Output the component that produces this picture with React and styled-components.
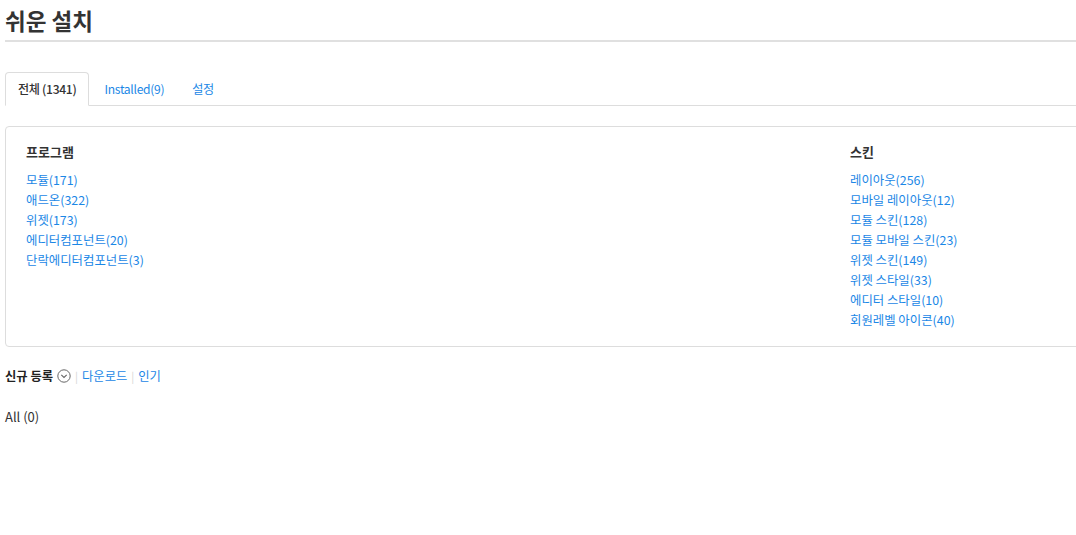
import React from "react";
import styled, { createGlobalStyle } from "styled-components";

const Global = createGlobalStyle`
  html, body { margin: 0; padding: 0; background: #fff; overflow: hidden; }
  body {
    font-family: "Noto Sans CJK KR", "Noto Sans", sans-serif;
    color: #333;
    font-size: 13px;
  }
  a { text-decoration: none; }
`;

const Page = styled.div`
  width: 1110px;
  padding: 0 5px;
`;

const Title = styled.h1`
  margin: 0;
  height: 40px;
  font-size: 22.5px;
  font-weight: 700;
  line-height: 40px;
  color: #333;
  border-bottom: 2px solid #e0e0e0;
`;

const Tabs = styled.ul`
  display: flex;
  list-style: none;
  margin: 30px 0 0;
  padding: 0;
  border-bottom: 1px solid #ddd;
`;

const Tab = styled.li`
  margin-right: 2px;
  margin-bottom: -1px;
  padding: 0 12px;
  height: 32px;
  line-height: 32px;
  font-size: 12.1px;
  letter-spacing: -0.3px;
  border: 1px solid ${(p) => (p.$active ? "#ddd" : "transparent")};
  border-bottom-color: ${(p) => (p.$active ? "#fff" : "transparent")};
  border-radius: 4px 4px 0 0;
  background: ${(p) => (p.$active ? "#fff" : "transparent")};
  color: ${(p) => (p.$active ? "#333" : "#1b87e6")};
  font-weight: ${(p) => (p.$active ? 500 : 400)};
`;

const Box = styled.div`
  margin-top: 20px;
  border: 1px solid #ddd;
  border-radius: 4px;
  padding: 15px 20px 16px;
  display: grid;
  grid-template-columns: 824px 1fr;
`;

const Column = styled.div`
  display: flex;
  flex-direction: column;
`;

const ColTitle = styled.h3`
  margin: 0 0 8px;
  font-size: 13px;
  font-weight: 700;
  line-height: 20px;
  color: #333;
`;

const Link = styled.a`
  display: block;
  line-height: 20px;
  font-size: 12.4px;
  color: #1b87e6;
`;

const Sort = styled.div`
  display: flex;
  align-items: center;
  margin-top: 19px;
  height: 20px;
  font-size: 12.3px;
`;

const SortActive = styled.span`
  font-weight: 700;
  color: #222;
  display: inline-flex;
  align-items: center;
  gap: 4px;
`;

const Sep = styled.span`
  color: #d5d5d5;
  margin: 0 4px;
  font-size: 11px;
`;

const SortLink = styled.a`
  color: #1b87e6;
`;

const Count = styled.p`
  margin: 21px 0 0;
  line-height: 20px;
  font-size: 13px;
  color: #333;
`;

const ChevronCircle = () => (
  <svg width="14" height="14" viewBox="0 0 14 14" fill="none">
    <circle cx="7" cy="7" r="6.2" stroke="#666" strokeWidth="1" />
    <path d="M4.3 5.8 L7 8.5 L9.7 5.8" stroke="#666" strokeWidth="1.1" fill="none" />
  </svg>
);

const programs = ["모듈(171)", "애드온(322)", "위젯(173)", "에디터컴포넌트(20)", "단락에디터컴포넌트(3)"];
const skins = [
  "레이아웃(256)",
  "모바일 레이아웃(12)",
  "모듈 스킨(128)",
  "모듈 모바일 스킨(23)",
  "위젯 스킨(149)",
  "위젯 스타일(33)",
  "에디터 스타일(10)",
  "회원레벨 아이콘(40)",
];

export default function App() {
  return (
    <>
      <Global />
      <Page>
        <Title>쉬운 설치</Title>
        <Tabs>
          <Tab $active>전체 (1341)</Tab>
          <Tab>Installed(9)</Tab>
          <Tab>설정</Tab>
        </Tabs>
        <Box>
          <Column>
            <ColTitle>프로그램</ColTitle>
            {programs.map((p) => (
              <Link key={p} href="#">{p}</Link>
            ))}
          </Column>
          <Column>
            <ColTitle>스킨</ColTitle>
            {skins.map((s) => (
              <Link key={s} href="#">{s}</Link>
            ))}
          </Column>
        </Box>
        <Sort>
          <SortActive>
            신규 등록 <ChevronCircle />
          </SortActive>
          <Sep>|</Sep>
          <SortLink href="#">다운로드</SortLink>
          <Sep>|</Sep>
          <SortLink href="#">인기</SortLink>
        </Sort>
        <Count>All (0)</Count>
      </Page>
    </>
  );
}
